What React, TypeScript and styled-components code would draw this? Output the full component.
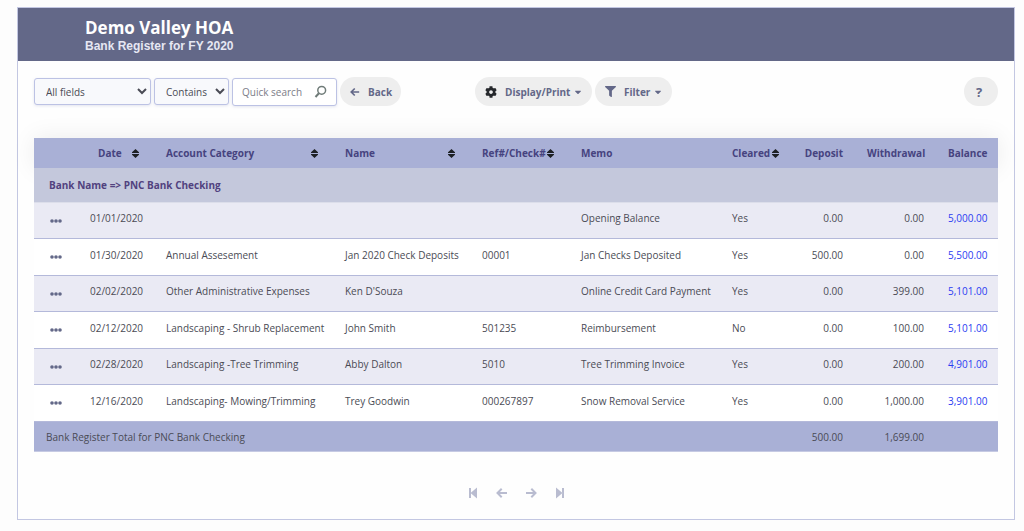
import React from "react";
import styled, { createGlobalStyle } from "styled-components";
import { FaCaretDown, FaCog, FaFilter } from "react-icons/fa";

const GlobalStyle = createGlobalStyle`
  *, *::before, *::after { box-sizing: border-box; }
  body {
    margin: 0;
    background: #fdfdfd;
    font-family: "Open Sans", "Noto Sans", sans-serif;
    font-size: 10px;
    line-height: 14px;
    color: #4a4b55;
  }
  button, input, select { font: inherit; color: inherit; }
  svg { flex-shrink: 0; }
`;

const Panel = styled.main`
  margin: 7px 9px 11px 17px;
  border: 1px solid #c3c7e2;
  background: #fefefe;
`;

const Banner = styled.header`
  height: 53px;
  padding: 9px 67px 0;
  background: #636888;
  color: #fff;
`;

const Title = styled.h1`
  margin: 0;
  font-size: 17px;
  line-height: 22px;
  font-weight: 700;
`;

const Subtitle = styled.p`
  margin: 0;
  font-family: "Liberation Sans", Arial, sans-serif;
  font-size: 12px;
  line-height: 14px;
  font-weight: 700;
  color: #e6e7f3;
`;

const Toolbar = styled.div`
  display: grid;
  grid-template-columns: 441px 1fr auto;
  align-items: center;
  height: 61px;
  padding: 0 16px;
`;

const Group = styled.div<{ $gap: number }>`
  display: flex;
  align-items: center;
  gap: ${(p) => p.$gap}px;
`;

const Select = styled.select<{ $width: number }>`
  width: ${(p) => p.$width}px;
  height: 27px;
  padding: 0 0 0 7px;
  border: 1px solid #bcc2e4;
  border-radius: 3px;
  background-color: #f8f9fc;
  box-shadow: 0 1px 3px rgba(120, 128, 180, 0.2);
`;

const SearchBox = styled.div`
  display: flex;
  align-items: center;
  width: 105px;
  height: 28px;
  padding: 0 9px;
  border: 1px solid #bcc2e4;
  border-radius: 3px;
  background: #fff;
  box-shadow: 0 1px 3px rgba(120, 128, 180, 0.2);
`;

const SearchInput = styled.input`
  flex: 1;
  min-width: 0;
  padding: 0;
  border: 0;
  outline: 0;
  background: transparent;
  &::placeholder { color: #7b7d88; opacity: 1; }
`;

const IconButton = styled.button`
  display: flex;
  padding: 0;
  border: 0;
  background: none;
  color: inherit;
  cursor: pointer;
`;

const Pill = styled.button<{ $width: number }>`
  display: flex;
  align-items: center;
  width: ${(p) => p.$width}px;
  height: 29px;
  padding: 0 0 0 10px;
  border: 0;
  border-radius: 15px;
  background: #eee;
  color: #636888;
  font-weight: 700;
  white-space: nowrap;
  cursor: pointer;
`;

const PillLabel = styled.span`
  margin: 0 3px 0 8px;
`;

const HelpButton = styled(Pill)`
  justify-content: center;
  padding: 0 4px 0 0;
  font-size: 13px;
`;

const Register = styled.table`
  width: calc(100% - 32px);
  margin: 16px 16px 0;
  border-collapse: separate;
  border-spacing: 0;
  table-layout: fixed;
`;

const HeadRow = styled.tr`
  height: 30px;
  box-shadow: 0 0 24px rgba(0, 0, 0, 0.08);
`;

const HeadCell = styled.th<{ $align?: "left" | "right"; $start?: number; $end?: number }>`
  padding: 0 ${(p) => p.$end ?? 12}px 0 ${(p) => p.$start ?? 12}px;
  background: #a9b0d6;
  color: #46437f;
  text-align: ${(p) => p.$align ?? "left"};
  white-space: nowrap;
`;

const SortButton = styled.button`
  display: flex;
  align-items: center;
  justify-content: space-between;
  gap: 1px;
  width: 100%;
  padding: 0;
  border: 0;
  background: none;
  color: inherit;
  font-weight: 700;
  cursor: pointer;
`;

const GroupCell = styled.th`
  height: 35px;
  padding: 0 15px;
  background: #c4c8dc;
  border-bottom: 1px solid #dcdeea;
  color: #51427f;
  text-align: left;
`;

const EntryRow = styled.tr`
  height: 36px;
  background: #eaeaf4;
  &:nth-child(odd) {
    height: 37px;
    background: #fff;
  }
`;

const Cell = styled.td<{ $right?: boolean }>`
  padding: 0 12px 5px;
  border-bottom: 1px solid #b4b9da;
  text-align: ${(p) => (p.$right ? "right" : "left")};
  white-space: nowrap;
`;

const MenuCell = styled(Cell)`
  padding: 0 16px;
  color: #636888;
`;

const BalanceLink = styled.a`
  color: #2b3cf2;
  text-decoration: none;
`;

const TotalCell = styled.td<{ $right?: boolean }>`
  height: 30px;
  padding: 0 12px;
  background: #a9b0d6;
  border-bottom: 1px solid #c6cae3;
  text-align: ${(p) => (p.$right ? "right" : "left")};
`;

const Pager = styled.nav`
  display: flex;
  justify-content: center;
  align-items: center;
  gap: 17px;
  height: 67px;
  padding: 15px 0 0;
  color: #b9bcd0;
`;

const SortIcon = () => (
  <svg width="7" height="9" viewBox="0 0 7 9" fill="#1d2024" aria-hidden="true">
    <path d="M3.5 0 7 3.2V4H0V3.2ZM0 5h7v.8L3.5 9 0 5.8Z" />
  </svg>
);

const ArrowIcon = ({ flip = false, size = 12 }: { flip?: boolean; size?: number }) => (
  <svg width={size} height={size} viewBox="0 0 12 12" fill="none" stroke="currentColor" strokeWidth="2" aria-hidden="true">
    <path d={flip ? "M1 6h9.5M6.3 1.8 10.5 6 6.3 10.2" : "M11 6H1.5M5.7 1.8 1.5 6l4.2 4.2"} />
  </svg>
);

const EndIcon = ({ flip = false }: { flip?: boolean }) => (
  <svg width="12" height="12" viewBox="0 0 12 12" fill="currentColor" aria-hidden="true">
    <path d={flip ? "M2 .5v11L8.500 6ZM8 1h2v10H8Z" : "M10 .5v11L3.500 6ZM2 1h2v10H2Z"} />
  </svg>
);

const SearchIcon = () => (
  <svg width="13" height="13" viewBox="0 0 13 13" fill="none" stroke="#6f7b78" strokeWidth="1.5" aria-hidden="true">
    <circle cx="7.700" cy="5.300" r="3.900" />
    <path d="M4.900 8.300 1.500 12" strokeWidth="2" />
  </svg>
);

const DotsIcon = () => (
  <svg width="12" height="4" viewBox="0 0 12 4" fill="currentColor" aria-hidden="true">
    <circle cx="2" cy="2" r="1.800" />
    <circle cx="6" cy="2" r="1.800" />
    <circle cx="10" cy="2" r="1.800" />
  </svg>
);

const columnWidths = [44, 76, 179, 137, 99, 151, 71, 64, 81, 62];

const entries = [
  ["01/01/2020", "", "", "", "Opening Balance", "Yes", "0.00", "0.00", "5,000.00"],
  ["01/30/2020", "Annual Assesement", "Jan 2020 Check Deposits", "00001", "Jan Checks Deposited", "Yes", "500.00", "0.00", "5,500.00"],
  ["02/02/2020", "Other Administrative Expenses", "Ken D'Souza", "", "Online Credit Card Payment", "Yes", "0.00", "399.00", "5,101.00"],
  ["02/12/2020", "Landscaping - Shrub Replacement", "John Smith", "501235", "Reimbursement", "No", "0.00", "100.00", "5,101.00"],
  ["02/28/2020", "Landscaping -Tree Trimming", "Abby Dalton", "5010", "Tree Trimming Invoice", "Yes", "0.00", "200.00", "4,901.00"],
  ["12/16/2020", "Landscaping- Mowing/Trimming", "Trey Goodwin", "000267897", "Snow Removal Service", "Yes", "0.00", "1,000.00", "3,901.00"],
];

const SortHead = ({ label, start, end = 15 }: { label: string; start?: number; end?: number }) => (
  <HeadCell scope="col" $start={start} $end={end}>
    <SortButton type="button">
      {label}
      <SortIcon />
    </SortButton>
  </HeadCell>
);

export default function App() {
  return (
    <>
      <GlobalStyle />
      <Panel>
        <Banner>
          <Title>Demo Valley HOA</Title>
          <Subtitle>Bank Register for FY 2020</Subtitle>
        </Banner>

        <Toolbar>
          <Group $gap={3}>
            <Select $width={117} aria-label="Search field" defaultValue="All fields">
              <option>All fields</option>
            </Select>
            <Select $width={75} aria-label="Search condition" defaultValue="Contains">
              <option>Contains</option>
            </Select>
            <SearchBox>
              <SearchInput type="text" placeholder="Quick search" aria-label="Quick search" />
              <IconButton type="button" aria-label="Search">
                <SearchIcon />
              </IconButton>
            </SearchBox>
            <Pill $width={61} type="button">
              <ArrowIcon size={10} />
              <PillLabel>Back</PillLabel>
            </Pill>
          </Group>
          <Group $gap={3}>
            <Pill $width={117} type="button">
              <FaCog size={12} color="#25272b" />
              <PillLabel>Display/Print</PillLabel>
              <FaCaretDown size={10} />
            </Pill>
            <Pill $width={77} type="button">
              <FaFilter size={11} />
              <PillLabel>Filter</PillLabel>
              <FaCaretDown size={10} />
            </Pill>
          </Group>
          <HelpButton $width={34} type="button" aria-label="Help">
            ?
          </HelpButton>
        </Toolbar>

        <Register>
          <colgroup>
            {columnWidths.map((width, i) => (
              <col key={i} width={width} />
            ))}
          </colgroup>
          <thead>
            <HeadRow>
              <HeadCell scope="col" aria-label="Actions" />
              <SortHead label="Date" start={20} />
              <SortHead label="Account Category" />
              <SortHead label="Name" />
              <SortHead label="Ref#/Check#" />
              <HeadCell scope="col">Memo</HeadCell>
              <SortHead label="Cleared" end={12} />
              <HeadCell scope="col" $align="right">Deposit</HeadCell>
              <HeadCell scope="col" $align="right">Withdrawal</HeadCell>
              <HeadCell scope="col" $align="right">Balance</HeadCell>
            </HeadRow>
          </thead>
          <tbody>
            <tr>
              <GroupCell colSpan={10} scope="rowgroup">
                Bank Name =&gt; PNC Bank Checking
              </GroupCell>
            </tr>
            {entries.map((entry) => (
              <EntryRow key={entry[0]}>
                <MenuCell>
                  <IconButton type="button" aria-label={`Actions for ${entry[0]}`}>
                    <DotsIcon />
                  </IconButton>
                </MenuCell>
                {entry.slice(0, 8).map((value, i) => (
                  <Cell key={i} $right={i > 5}>{value}</Cell>
                ))}
                <Cell $right>
                  <BalanceLink href="#balance">{entry[8]}</BalanceLink>
                </Cell>
              </EntryRow>
            ))}
          </tbody>
          <tfoot>
            <tr>
              <TotalCell colSpan={7}>Bank Register Total for PNC Bank Checking</TotalCell>
              <TotalCell $right>500.00</TotalCell>
              <TotalCell $right>1,699.00</TotalCell>
              <TotalCell />
            </tr>
          </tfoot>
        </Register>

        <Pager aria-label="Pages">
          <IconButton type="button" aria-label="First page"><EndIcon /></IconButton>
          <IconButton type="button" aria-label="Previous page"><ArrowIcon /></IconButton>
          <IconButton type="button" aria-label="Next page"><ArrowIcon flip /></IconButton>
          <IconButton type="button" aria-label="Last page"><EndIcon flip /></IconButton>
        </Pager>
      </Panel>
    </>
  );
}
